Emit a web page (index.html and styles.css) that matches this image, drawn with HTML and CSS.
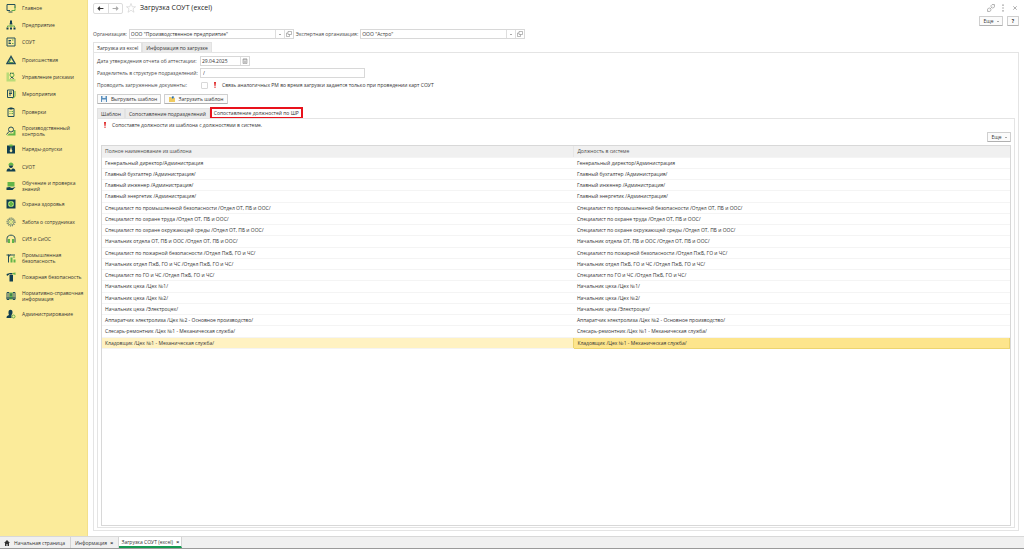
FILE: index.html
```
<!DOCTYPE html>
<html lang="ru">
<head>
    <meta charset="UTF-8">
    <meta name="viewport" content="width=device-width, initial-scale=1.0">
    <title>Загрузка СОУТ (excel)</title>
    <link rel="stylesheet" href="styles.css">
</head>
<body>
    <div class="workspace">
        <nav class="sidebar">
            <ul>
                <li><a href="#"><svg viewBox="0 0 20 20"><path class="line" d="M8 15H2V3h16v7"/><path class="line" d="M5 18h8"/><path class="green-line" d="M11 15h7V7"/></svg><span>Главное</span></a></li>
                <li><a href="#"><svg viewBox="0 0 20 20"><path class="fill" d="M8 1h4v4l1 4H7l1-4zM1 15h4v4H1zM8 15h4v4H8zM15 15h4v4h-4z"/><path class="green-line" d="M10 9v5M3 14v-2h14v2"/></svg><span>Предприятие</span></a></li>
                <li><a href="#"><svg viewBox="0 0 20 20"><path class="line" d="M2 2h16v16H2z"/><path class="line" d="M5 7h5M5 10h4M5 13h5"/><path class="green-line" d="M12 6h3M12 13h3"/></svg><span>СОУТ</span></a></li>
                <li><a href="#"><svg viewBox="0 0 20 20"><path class="green-line" d="M10 8l-4 7h8"/><path class="line heavy" d="M10 3L2 17h16z"/></svg><span>Происшествия</span></a></li>
                <li><a href="#"><svg viewBox="0 0 20 20"><path class="pale" d="M1 1h5v18H1zM1 14h18v5H1z"/><circle class="green-line" cx="12" cy="6" r="4"/><path class="line" d="M8 2l2 1M15 2l-2 1M9 13l3-3 3 4"/></svg><span>Управление рисками</span></a></li>
                <li><a href="#"><svg viewBox="0 0 20 20"><path class="line" d="M3 2h12v15H3z"/><path class="line" d="M6 6h6M6 9h6M6 12h4"/><path class="green-line" d="M18 4v11l-5 4"/></svg><span>Мероприятия</span></a></li>
                <li><a href="#"><svg viewBox="0 0 20 20"><path class="line" d="M4 3h12v16H4z"/><path class="fill" d="M7 1h6v4H7z"/><path class="green-line" d="M7 9h2M7 13h2M11 9h3M11 13h3"/></svg><span>Проверки</span></a></li>
                <li class="double"><a href="#"><svg viewBox="0 0 20 20"><path class="green" d="M15 8h4v11H2l4-4h9z"/><circle class="line" cx="10" cy="7" r="5"/><path class="line" d="M6 11l-5 6"/></svg><span>Производственный контроль</span></a></li>
                <li><a href="#"><svg viewBox="0 0 20 20"><path class="fill" d="M2 3h16v16H2z"/><path class="green" d="M7 1h6v4H7z"/><path class="cut" d="M9 7h2v3l2 4-3 3-3-3 2-4z"/></svg><span>Наряды-допуски</span></a></li>
                <li><a href="#"><svg viewBox="0 0 20 20"><path class="green" d="M5 6c0-7 10-7 10 0v1H5z"/><path class="fill" d="M6 7h8c0 3-1 5-4 5s-4-2-4-5zM1 19c0-5 3-6 6-6l3 3 3-3c3 0 6 1 6 6z"/></svg><span>СУОТ</span></a></li>
                <li class="double"><a href="#"><svg viewBox="0 0 20 20"><path class="green" d="M3 2h14v9H3z"/><path class="fill" d="M1 13l6-1 5 2 7-2-6 6H1z"/></svg><span>Обучение и проверка знаний</span></a></li>
                <li><a href="#"><svg viewBox="0 0 20 20"><path class="fill" d="M1 1h18v18H1z"/><circle class="pale" cx="10" cy="10" r="6"/><path class="green" d="M8 5h4v3h3v4h-3v3H8v-3H5V8h3z"/></svg><span>Охрана здоровья</span></a></li>
                <li><a href="#"><svg viewBox="0 0 20 20"><circle class="line dash" cx="10" cy="10" r="8"/><circle class="line thin" cx="10" cy="10" r="6"/><circle class="green-line thin" cx="10" cy="10" r="3"/></svg><span>Забота о сотрудниках</span></a></li>
                <li><a href="#"><svg viewBox="0 0 20 20"><path class="line" d="M2 17V9c0-9 16-9 16 0v8"/><path class="green" d="M4 10h4v8H4zM12 10h4v8h-4z"/></svg><span>СИЗ и СиОС</span></a></li>
                <li class="double"><a href="#"><svg viewBox="0 0 20 20"><path class="line" d="M5 19V3M1 4h17M5 8l4-5"/><path class="green" d="M9 9h4v10H9zM15 13h4v6h-4zM15 5h2v5h-2z"/></svg><span>Промышленная безопасность</span></a></li>
                <li><a href="#"><svg viewBox="0 0 20 20"><path class="fill" d="M7 6h7v13H7zM8 2h5v3H8zM1 4l7-2v2L2 8z"/><path class="green" d="M13 2l6-1v5l-6-2z"/></svg><span>Пожарная безопасность</span></a></li>
                <li class="double"><a href="#"><svg viewBox="0 0 20 20"><path class="line" d="M2 3h4v14H2zM14 3h4v14h-4z"/><path class="green" d="M7 3h6v14H7z"/><path class="line" d="M1 14h18M10 5v5"/></svg><span>Нормативно-справочная информация</span></a></li>
                <li><a href="#"><svg viewBox="0 0 20 20"><path class="fill" d="M5 6c0-6 8-6 8 0 0 4-1 5-2 6v6H1c0-4 2-5 5-6-1-2-1-3-1-6z"/><circle class="green-line" cx="15" cy="15" r="3"/></svg><span>Администрирование</span></a></li>
            </ul>
        </nav>

        <main>
            <header class="titlebar">
                <div class="history">
                    <button aria-label="Назад"><svg viewBox="0 0 12 8"><path d="M11 4H2M5 1L2 4l3 3"/></svg></button>
                    <button class="off" aria-label="Вперед"><svg viewBox="0 0 12 8"><path d="M1 4h9M7 1l3 3-3 3"/></svg></button>
                </div>
                <svg class="star" viewBox="0 0 20 20"><path d="M10 1l2.500 6.500H19l-5 4 2 7-6-4-6 4 2-7-5-4h6.500z"/></svg>
                <h1>Загрузка СОУТ (excel)</h1>
                <div class="window-icons">
                    <button aria-label="Ссылка"><svg viewBox="0 0 14 14"><path d="M7 5V3l2-2h4v4l-2 2H9M7 9v2l-2 2H1V9l2-2h2M5 9l4-4"/></svg></button>
                    <button aria-label="Меню"><svg viewBox="0 0 14 14"><path class="dots" d="M7 1v2M7 6v2M7 11v2"/></svg></button>
                    <button aria-label="Закрыть"><svg viewBox="0 0 14 14"><path d="M4 4l6 6M10 4l-6 6"/></svg></button>
                </div>
            </header>

            <div class="commands top">
                <button class="btn more">Еще<i></i></button>
                <button class="btn help">?</button>
            </div>

            <div class="orgs">
                <label for="org">Организация:</label>
                <div class="combo">
                    <select id="org"><option>ООО "Производственное предприятие"</option></select>
                    <span class="arrow"></span>
                    <button aria-label="Открыть"><svg viewBox="0 0 12 12"><path d="M4 1h7v6H4zM4 4H1v7h6V7"/></svg></button>
                </div>
                <label for="expert">Экспертная организация:</label>
                <div class="combo">
                    <select id="expert"><option>ООО "Астро"</option></select>
                    <span class="arrow"></span>
                    <button aria-label="Открыть"><svg viewBox="0 0 12 12"><path d="M4 1h7v6H4zM4 4H1v7h6V7"/></svg></button>
                </div>
            </div>

            <div class="tabs">
                <button class="active">Загрузка из excel</button>
                <button>Информация по загрузке</button>
            </div>
            <section class="panel outer">
                <div class="row">
                    <label for="date">Дата утверждения отчета об аттестации:</label>
                    <div class="combo date">
                        <input type="text" id="date" value="29.04.2025">
                        <button aria-label="Календарь"><svg viewBox="0 0 12 12"><path d="M2 2h8v9H2zM2 4h8M4 1v2M8 1v2M4 6v4M6 6v4M8 6v4"/></svg></button>
                    </div>
                </div>
                <div class="row">
                    <label for="separator">Разделитель в структуре подразделений:</label>
                    <input type="text" id="separator" value="/">
                </div>
                <div class="row">
                    <label for="post">Проводить загруженные документы:</label>
                    <input type="checkbox" id="post">
                    <svg class="mark" viewBox="0 0 4 12"><path d="M0 0h4L3 8H1zM1 9h2v3H1z"/></svg>
                    <span>Связь аналогичных РМ во время загрузки задается только при проведении карт СОУТ</span>
                </div>
                <div class="actions">
                    <button class="btn"><svg viewBox="0 0 12 12"><path fill="#5b8fbd" d="M0 0h12v12H0z"/><path fill="#e9f1f7" d="M3 0h6v4H3zM2 7h8v5H2z"/></svg>Выгрузить шаблон</button>
                    <button class="btn"><svg viewBox="0 0 12 12"><path fill="#f0cb60" d="M0 2h4l1 2h7v8H0z"/><path fill="#2f6ea5" d="M6 5V3H4l4-3 3 3H9v2z"/></svg>Загрузить шаблон</button>
                </div>

                <div class="tabs inner-tabs">
                    <button>Шаблон</button>
                    <button>Сопоставление подразделений</button>
                    <button class="active marked">Сопоставление должностей по ШР</button>
                </div>
                <section class="panel inner">
                    <p class="warning">
                        <svg class="mark" viewBox="0 0 4 12"><path d="M0 0h4L3 8H1zM1 9h2v3H1z"/></svg>
                        Сопоставте должности из шаблона с должностями в системе.
                    </p>
                    <div class="commands">
                        <button class="btn more">Еще<i></i></button>
                    </div>
                    <div class="grid">
                        <table>
                            <thead>
                                <tr><th>Полное наименование из шаблона</th><th>Должность в системе</th></tr>
                            </thead>
                            <tbody>
                                <tr><td>Генеральный директор/Администрация</td><td>Генеральный директор/Администрация</td></tr>
                                <tr><td>Главный бухгалтер /Администрация/</td><td>Главный бухгалтер /Администрация/</td></tr>
                                <tr><td>Главный инженер /Администрация/</td><td>Главный инженер /Администрация/</td></tr>
                                <tr><td>Главный энергетик /Администрация/</td><td>Главный энергетик /Администрация/</td></tr>
                                <tr><td>Специалист по промышленной безопасности /Отдел ОТ, ПБ и ООС/</td><td>Специалист по промышленной безопасности /Отдел ОТ, ПБ и ООС/</td></tr>
                                <tr><td>Специалист по охране труда /Отдел ОТ, ПБ и ООС/</td><td>Специалист по охране труда /Отдел ОТ, ПБ и ООС/</td></tr>
                                <tr><td>Специалист по охране окружающей среды /Отдел ОТ, ПБ и ООС/</td><td>Специалист по охране окружающей среды /Отдел ОТ, ПБ и ООС/</td></tr>
                                <tr><td>Начальник отдела ОТ, ПБ и ООС /Отдел ОТ, ПБ и ООС/</td><td>Начальник отдела ОТ, ПБ и ООС /Отдел ОТ, ПБ и ООС/</td></tr>
                                <tr><td>Специалист по пожарной безопасности /Отдел ПжБ, ГО и ЧС/</td><td>Специалист по пожарной безопасности /Отдел ПжБ, ГО и ЧС/</td></tr>
                                <tr><td>Начальник отдел ПжБ, ГО и ЧС /Отдел ПжБ, ГО и ЧС/</td><td>Начальник отдел ПжБ, ГО и ЧС /Отдел ПжБ, ГО и ЧС/</td></tr>
                                <tr><td>Специалист по ГО и ЧС /Отдел ПжБ, ГО и ЧС/</td><td>Специалист по ГО и ЧС /Отдел ПжБ, ГО и ЧС/</td></tr>
                                <tr><td>Начальник цеха /Цех №1/</td><td>Начальник цеха /Цех №1/</td></tr>
                                <tr><td>Начальник цеха /Цех №2/</td><td>Начальник цеха /Цех №2/</td></tr>
                                <tr><td>Начальник цеха /Электроцех/</td><td>Начальник цеха /Электроцех/</td></tr>
                                <tr><td>Аппаратчик электролиза /Цех №2 - Основное производство/</td><td>Аппаратчик электролиза /Цех №2 - Основное производство/</td></tr>
                                <tr><td>Слесарь-ремонтник /Цех №1 - Механическая служба/</td><td>Слесарь-ремонтник /Цех №1 - Механическая служба/</td></tr>
                                <tr class="selected"><td>Кладовщик /Цех №1 - Механическая служба/</td><td class="current">Кладовщик /Цех №1 - Механическая служба/</td></tr>
                            </tbody>
                        </table>
                    </div>
                </section>
            </section>
        </main>
    </div>

    <footer class="taskbar">
        <a href="#" class="home"><svg viewBox="0 0 12 12"><path d="M6 0l6 6h-2v6H7V8H5v4H2V6H0z"/></svg>Начальная страница</a>
        <a href="#">Информация <b>×</b></a>
        <a href="#" class="active">Загрузка СОУТ (excel) <b>×</b></a>
    </footer>
</body>
</html>
```
FILE: styles.css
```
* {
    box-sizing: border-box;
}
body {
    margin: 0;
    min-height: 100vh;
    display: flex;
    flex-direction: column;
    background-color: #fff;
    color: #333;
    font-family: "Open Sans", Arial, sans-serif;
    font-size: 5px;
    line-height: 6px;
}
button, input, select {
    margin: 0;
    padding: 0;
    border: 0;
    background: none;
    color: inherit;
    font: inherit;
}
a {
    color: inherit;
    text-decoration: none;
}
.workspace {
    flex: 1;
    display: flex;
}

/* sidebar */
.sidebar {
    width: 88px;
    background-color: #fbeb9a;
    border-right: 1px solid #f3e08a;
}
.sidebar ul {
    margin: 0;
    padding: 1px 0 0 6px;
    list-style: none;
}
.sidebar li {
    margin-bottom: 3px;
}
.sidebar li:nth-child(3n) {
    margin-bottom: 4px;
}
.sidebar a {
    display: flex;
    align-items: center;
    gap: 6px;
    height: 14px;
}
.sidebar .double a {
    height: 17px;
}
.sidebar svg {
    flex: none;
    width: 10px;
    height: 10px;
}
.line, .green-line {
    fill: none;
    stroke: #24505a;
    stroke-width: 2;
}
.green-line {
    stroke: #62ad4a;
}
.heavy {
    stroke-width: 3;
}
.thin {
    stroke-width: 1;
}
.dash {
    stroke-dasharray: 2 2;
}
.fill {
    fill: #123f50;
}
.green {
    fill: #62b548;
}
.pale {
    fill: #b9dc79;
}
.cut {
    fill: #fbeb9a;
}

/* form */
main {
    flex: 1;
    display: flex;
    flex-direction: column;
    padding: 2px 5px 5px;
}
.titlebar {
    display: flex;
    align-items: center;
    height: 12px;
}
.history {
    display: flex;
    width: 30px;
    height: 11px;
    border: 1px solid #dcdcdc;
    border-radius: 2px;
}
.history button {
    flex: 1;
    display: flex;
    align-items: center;
    justify-content: center;
}
.history button + button {
    border-left: 1px solid #dcdcdc;
}
.history svg {
    width: 7px;
    height: 5px;
    fill: none;
    stroke: #333;
    stroke-width: 2;
}
.history .off svg {
    stroke: #aaa;
}
.star {
    width: 10px;
    height: 10px;
    margin: 0 4px 0 3px;
    fill: none;
    stroke: #c4c4c4;
}
h1 {
    margin: 0;
    font-size: 7px;
    font-weight: normal;
    line-height: 10px;
    color: #222;
}
.window-icons {
    display: flex;
    gap: 4px;
    margin-left: auto;
}
.window-icons button {
    display: flex;
}
.window-icons svg {
    width: 8px;
    height: 8px;
    fill: none;
    stroke: #777;
}
.window-icons .dots {
    stroke-width: 2;
}
.commands {
    display: flex;
    justify-content: flex-end;
    gap: 4px;
}
.commands.top {
    margin-top: 2px;
}
.btn {
    display: flex;
    align-items: center;
    justify-content: center;
    height: 10px;
    border: 1px solid #cfcfcf;
    border-bottom-color: #b0b0b0;
    border-radius: 1px;
    background-color: #fbfbfb;
}
.btn svg {
    width: 6px;
    height: 6px;
    margin-right: 4px;
}
.more {
    width: 24px;
    gap: 3px;
}
.more i {
    border: 1px solid transparent;
    border-top-color: #555;
    border-bottom: 0;
}
.help {
    width: 12px;
    font-weight: bold;
}
.orgs {
    display: flex;
    align-items: center;
    gap: 2px;
    margin-top: 3px;
}
label {
    color: #4a4a4a;
}
.orgs label {
    white-space: nowrap;
}
.combo {
    display: flex;
    width: 165px;
    height: 10px;
    border: 1px solid #d8d8d8;
}
.combo select, .combo input {
    flex: 1;
    min-width: 0;
    padding-left: 1px;
    appearance: none;
}
.combo button, .arrow {
    display: flex;
    align-items: center;
    justify-content: center;
    width: 9px;
    border-left: 1px solid #dedede;
}
.combo svg {
    width: 6px;
    height: 6px;
    fill: none;
    stroke: #777;
}
.arrow::before {
    content: "";
    border: 1px solid transparent;
    border-top-color: #555;
    border-bottom: 0;
}
.tabs {
    display: flex;
    margin-top: 3px;
}
.tabs button {
    height: 10px;
    padding: 0 3px;
    border: 1px solid #e2e2e2;
    border-bottom: 0;
    background-color: #ebebeb;
}
.tabs .active {
    background-color: #fff;
}
.tabs .marked {
    height: 12px;
    margin-bottom: -1px;
    padding: 0 2px;
    border: 2px solid #e8121c;
}
.panel {
    flex: 1;
    display: flex;
    flex-direction: column;
    border: 1px solid #e4e4e4;
}
.outer {
    padding: 3px 3px 2px;
}
.inner {
    padding: 3px 3px 1px;
}
.row {
    display: flex;
    align-items: center;
    height: 10px;
    margin-bottom: 2px;
}
.row label {
    width: 103px;
    white-space: nowrap;
}
.combo.date {
    width: 50px;
}
#separator {
    width: 165px;
    height: 10px;
    padding-left: 2px;
    border: 1px solid #d8d8d8;
}
#post {
    appearance: none;
    width: 7px;
    height: 7px;
    margin: 0 6px 0 1px;
    border: 1px solid #d8d8d8;
    border-radius: 1px;
}
.mark {
    width: 2px;
    height: 6px;
    margin-right: 6px;
    fill: #e02424;
}
.actions {
    display: flex;
    gap: 3px;
    margin-top: 2px;
}
.actions .btn {
    width: 64px;
}
.inner-tabs {
    align-items: flex-end;
}
.warning {
    display: flex;
    align-items: center;
    height: 6px;
    margin: 0 0 4px 3px;
}
.grid {
    flex: 1;
    margin-top: 3px;
    border: 1px solid #d8d8d8;
}
table {
    width: 100%;
    border-collapse: collapse;
    table-layout: fixed;
}
th, td {
    height: 11px;
    padding: 0 3px;
    border-bottom: 1px solid #f4f4f4;
    text-align: left;
    font-weight: normal;
}
th {
    background-color: #f0f0f0;
    color: #4a4a4a;
}
th:first-child {
    width: 52%;
}
th + th {
    border-left: 1px solid #e6e6e6;
}
tbody tr:nth-child(4n) td {
    height: 12px;
}
.selected td {
    background-color: #fff2c2;
}
.selected .current {
    background-color: #fde58c;
    border: 1px solid #ecd470;
}

/* open windows */
.taskbar {
    display: flex;
    height: 13px;
    border-top: 1px solid #d8d8d8;
    border-bottom: 1px solid #9a9a9a;
    background-color: #f0f0f0;
}
.taskbar a {
    display: flex;
    align-items: center;
    gap: 3px;
    padding: 0 4px;
    border-right: 1px solid #d4d4d4;
}
.taskbar .home {
    gap: 4px;
    padding-right: 5px;
}
.taskbar b {
    font-size: 6px;
}
.taskbar svg {
    width: 6px;
    height: 6px;
    fill: #333;
}
.taskbar .active {
    padding: 0 2px 0 3px;
    border-bottom: 2px solid #159a52;
    background-color: #fff;
}
```
